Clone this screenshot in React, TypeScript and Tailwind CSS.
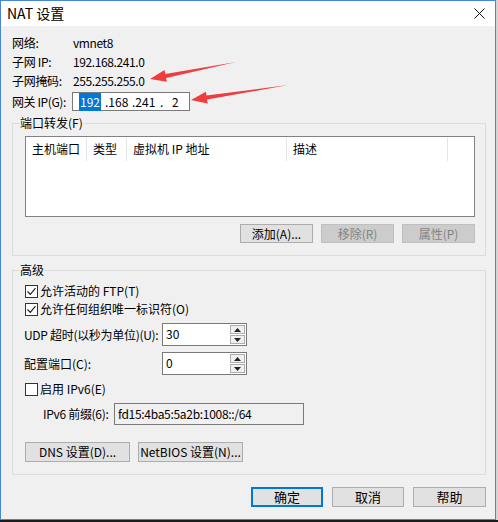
import type { ReactNode } from "react";

const font = "font-['Noto_Sans_CJK_SC','Noto_Sans',sans-serif]";

function Checkbox({ checked }: { checked?: boolean }) {
  return (
    <span className="flex h-[13px] w-[13px] shrink-0 items-center justify-center border border-[#333333] bg-white">
      {checked && (
        <svg width="11" height="11" viewBox="0 0 11 11">
          <path d="M1.5 5.5 L4.3 8.3 L9.5 2.2" fill="none" stroke="#222" strokeWidth="1.2" />
        </svg>
      )}
    </span>
  );
}

function CheckRow({ checked, children }: { checked?: boolean; children: ReactNode }) {
  return (
    <div className="flex h-[18px] items-center gap-[2px] ml-[5px]">
      <Checkbox checked={checked} />
      <span className="whitespace-nowrap">{children}</span>
    </div>
  );
}

function Button({
  children,
  disabled,
  primary,
  className,
}: {
  children: ReactNode;
  disabled?: boolean;
  primary?: boolean;
  className?: string;
}) {
  return (
    <div
      className={
        "flex items-center justify-center whitespace-nowrap border " +
        (disabled
          ? "border-[#bfbfbf] bg-[#cccccc] text-[#838383] "
          : primary
            ? "border-2 border-[#0078d7] bg-[#e1e1e1] text-black "
            : "border-[#adadad] bg-[#e1e1e1] text-black ") +
        (className ?? "")
      }
    >
      {children}
    </div>
  );
}

function Spin() {
  return (
    <div className="flex w-[16px] flex-col gap-[1px] py-[1px] pr-[1px]">
      <div className="flex flex-1 items-center justify-center border border-[#adadad] bg-[#f0f0f0]">
        <svg width="7" height="4" viewBox="0 0 7 4">
          <path d="M0 4 L3.5 0 L7 4 Z" fill="#222" />
        </svg>
      </div>
      <div className="flex flex-1 items-center justify-center border border-[#adadad] bg-[#f0f0f0]">
        <svg width="7" height="4" viewBox="0 0 7 4">
          <path d="M0 0 L3.5 4 L7 0 Z" fill="#222" />
        </svg>
      </div>
    </div>
  );
}

function SpinField({ value }: { value: string }) {
  return (
    <div className="flex h-[23px] w-[85px] border border-[#7a7a7a] bg-white">
      <span className="flex-1 pl-[3px] pt-[1px] leading-[18px]">{value}</span>
      <Spin />
    </div>
  );
}

function InfoRow({ label, value }: { label: string; value: string }) {
  return (
    <div className="flex h-[19px] items-center">
      <span className="w-[61px] whitespace-nowrap tracking-[-0.3px]">{label}</span>
      <span className="tracking-[-0.4px]">{value}</span>
    </div>
  );
}

export default function App() {
  return (
    <div className={`relative flex h-[522px] w-[498px] flex-col bg-[#1c1c1c] text-[12px] text-black ${font}`}>
      <div className="flex h-[520px]">
        <div className="flex h-[520px] w-[496px] flex-col border border-[#4a86d6] bg-[#f0f0f0]">
          {/* title bar */}
          <div className="flex h-[25px] shrink-0 items-center justify-between bg-white pl-[6px] pr-[10px]">
            <span className="text-[14px]">NAT 设置</span>
            <svg width="11" height="11" viewBox="0 0 11 11">
              <path d="M0.5 0.5 L10.5 10.5 M10.5 0.5 L0.5 10.5" stroke="#111" strokeWidth="1" />
            </svg>
          </div>

          <div className="flex flex-1 flex-col pl-[11px]">
            <div className="mt-[7px] flex flex-col">
              <InfoRow label="网络:" value="vmnet8" />
              <InfoRow label="子网 IP:" value="192.168.241.0" />
              <InfoRow label="子网掩码:" value="255.255.255.0" />
              <div className="mt-[2px] flex h-[19px] items-center">
                <span className="w-[60px] whitespace-nowrap tracking-[-0.4px]">网关 IP(G):</span>
                <div className="flex h-[19px] w-[118px] items-center border border-[#7a7a7a] bg-white pl-[6px]">
                  <span className="bg-[#0078d7] px-[1px] text-white">192</span>
                  <span className="ml-[4px] w-[25px]">.168</span>
                  <span className="ml-[2px] w-[28px]">.241</span>
                  <span className="w-[12px]">.</span>
                  <span>2</span>
                </div>
              </div>
            </div>

            {/* port forwarding */}
            <fieldset className="mt-[5px] w-[474px] border border-[#dcdcdc] pb-[12px] pl-[7px]">
              <legend className="leading-[14px]">端口转发(F)</legend>
              <div className="ml-[5px] mt-[6px] h-[81px] w-[450px] border border-[#828282] bg-white">
                <div className="flex h-[24px] items-center">
                  <span className="w-[60px] pl-[6px]">主机端口</span>
                  <span className="h-[23px] w-px bg-[#e5e5e5]" />
                  <span className="w-[39px] pl-[6px]">类型</span>
                  <span className="h-[23px] w-px bg-[#e5e5e5]" />
                  <span className="w-[159px] pl-[6px]">虚拟机 IP 地址</span>
                  <span className="h-[23px] w-px bg-[#e5e5e5]" />
                  <span className="w-[160px] pl-[6px]">描述</span>
                  <span className="h-[23px] w-px bg-[#e5e5e5]" />
                </div>
              </div>
              <div className="mt-[7px] flex w-[455px] justify-end gap-[8px]">
                <Button className="h-[19px] w-[73px]">添加(A)...</Button>
                <Button disabled className="h-[19px] w-[73px]">
                  移除(R)
                </Button>
                <Button disabled className="h-[19px] w-[73px]">
                  属性(P)
                </Button>
              </div>
            </fieldset>

            {/* advanced */}
            <fieldset className="mt-[7px] w-[474px] border border-[#dcdcdc] pb-[12px] pl-[7px]">
              <legend className="leading-[14px]">高级</legend>
              <div className="mt-[5px] flex flex-col">
                <CheckRow checked>允许活动的 FTP(T)</CheckRow>
                <CheckRow checked>允许任何组织唯一标识符(O)</CheckRow>
                <div className="mt-[5px] ml-[4px] flex items-center">
                  <span className="w-[138px] whitespace-nowrap tracking-[-0.3px]">UDP 超时(以秒为单位)(U):</span>
                  <SpinField value="30" />
                </div>
                <div className="mt-[6px] ml-[4px] flex items-center">
                  <span className="w-[138px] whitespace-nowrap">配置端口(C):</span>
                  <SpinField value="0" />
                </div>
                <div className="mt-[5px]">
                  <CheckRow>启用 IPv6(E)</CheckRow>
                </div>
                <div className="mt-[5px] ml-[23px] flex items-center">
                  <span className="w-[71px] whitespace-nowrap tracking-[-0.3px]">IPv6 前缀(6):</span>
                  <div className="flex h-[22px] w-[190px] items-center border border-[#7a7a7a] bg-[#f0f0f0] pl-[3px] tracking-[-0.3px]">
                    fd15:4ba5:5a2b:1008::/64
                  </div>
                </div>
                <div className="mt-[17px] ml-[5px] flex gap-[8px]">
                  <Button className="h-[20px] w-[105px]">DNS 设置(D)...</Button>
                  <Button className="h-[20px] w-[105px]">NetBIOS 设置(N)...</Button>
                </div>
              </div>
            </fieldset>

            <div className="mt-[12px] flex w-[474px] justify-end gap-[9px]">
              <Button primary className="h-[20px] w-[72px] text-[13px]">
                确定
              </Button>
              <Button className="h-[20px] w-[72px] text-[13px]">取消</Button>
              <Button className="h-[20px] w-[73px] text-[13px]">帮助</Button>
            </div>
          </div>
        </div>
        <div className="flex-1 bg-[#d4d4d4]" />
      </div>

      {/* annotation arrows */}
      <svg className="pointer-events-none absolute left-0 top-0" width="498" height="522" viewBox="0 0 498 522">
        <polygon
          points="150,79 164.5,70 165.3,74 236,62 166.1,77.9 166.9,81.8"
          fill="#f03c3c"
        />
        <polygon
          points="191,100 205.9,91.7 206.5,95.6 288,85 207.1,99.6 207.7,103.5"
          fill="#f03c3c"
        />
      </svg>
    </div>
  );
}
